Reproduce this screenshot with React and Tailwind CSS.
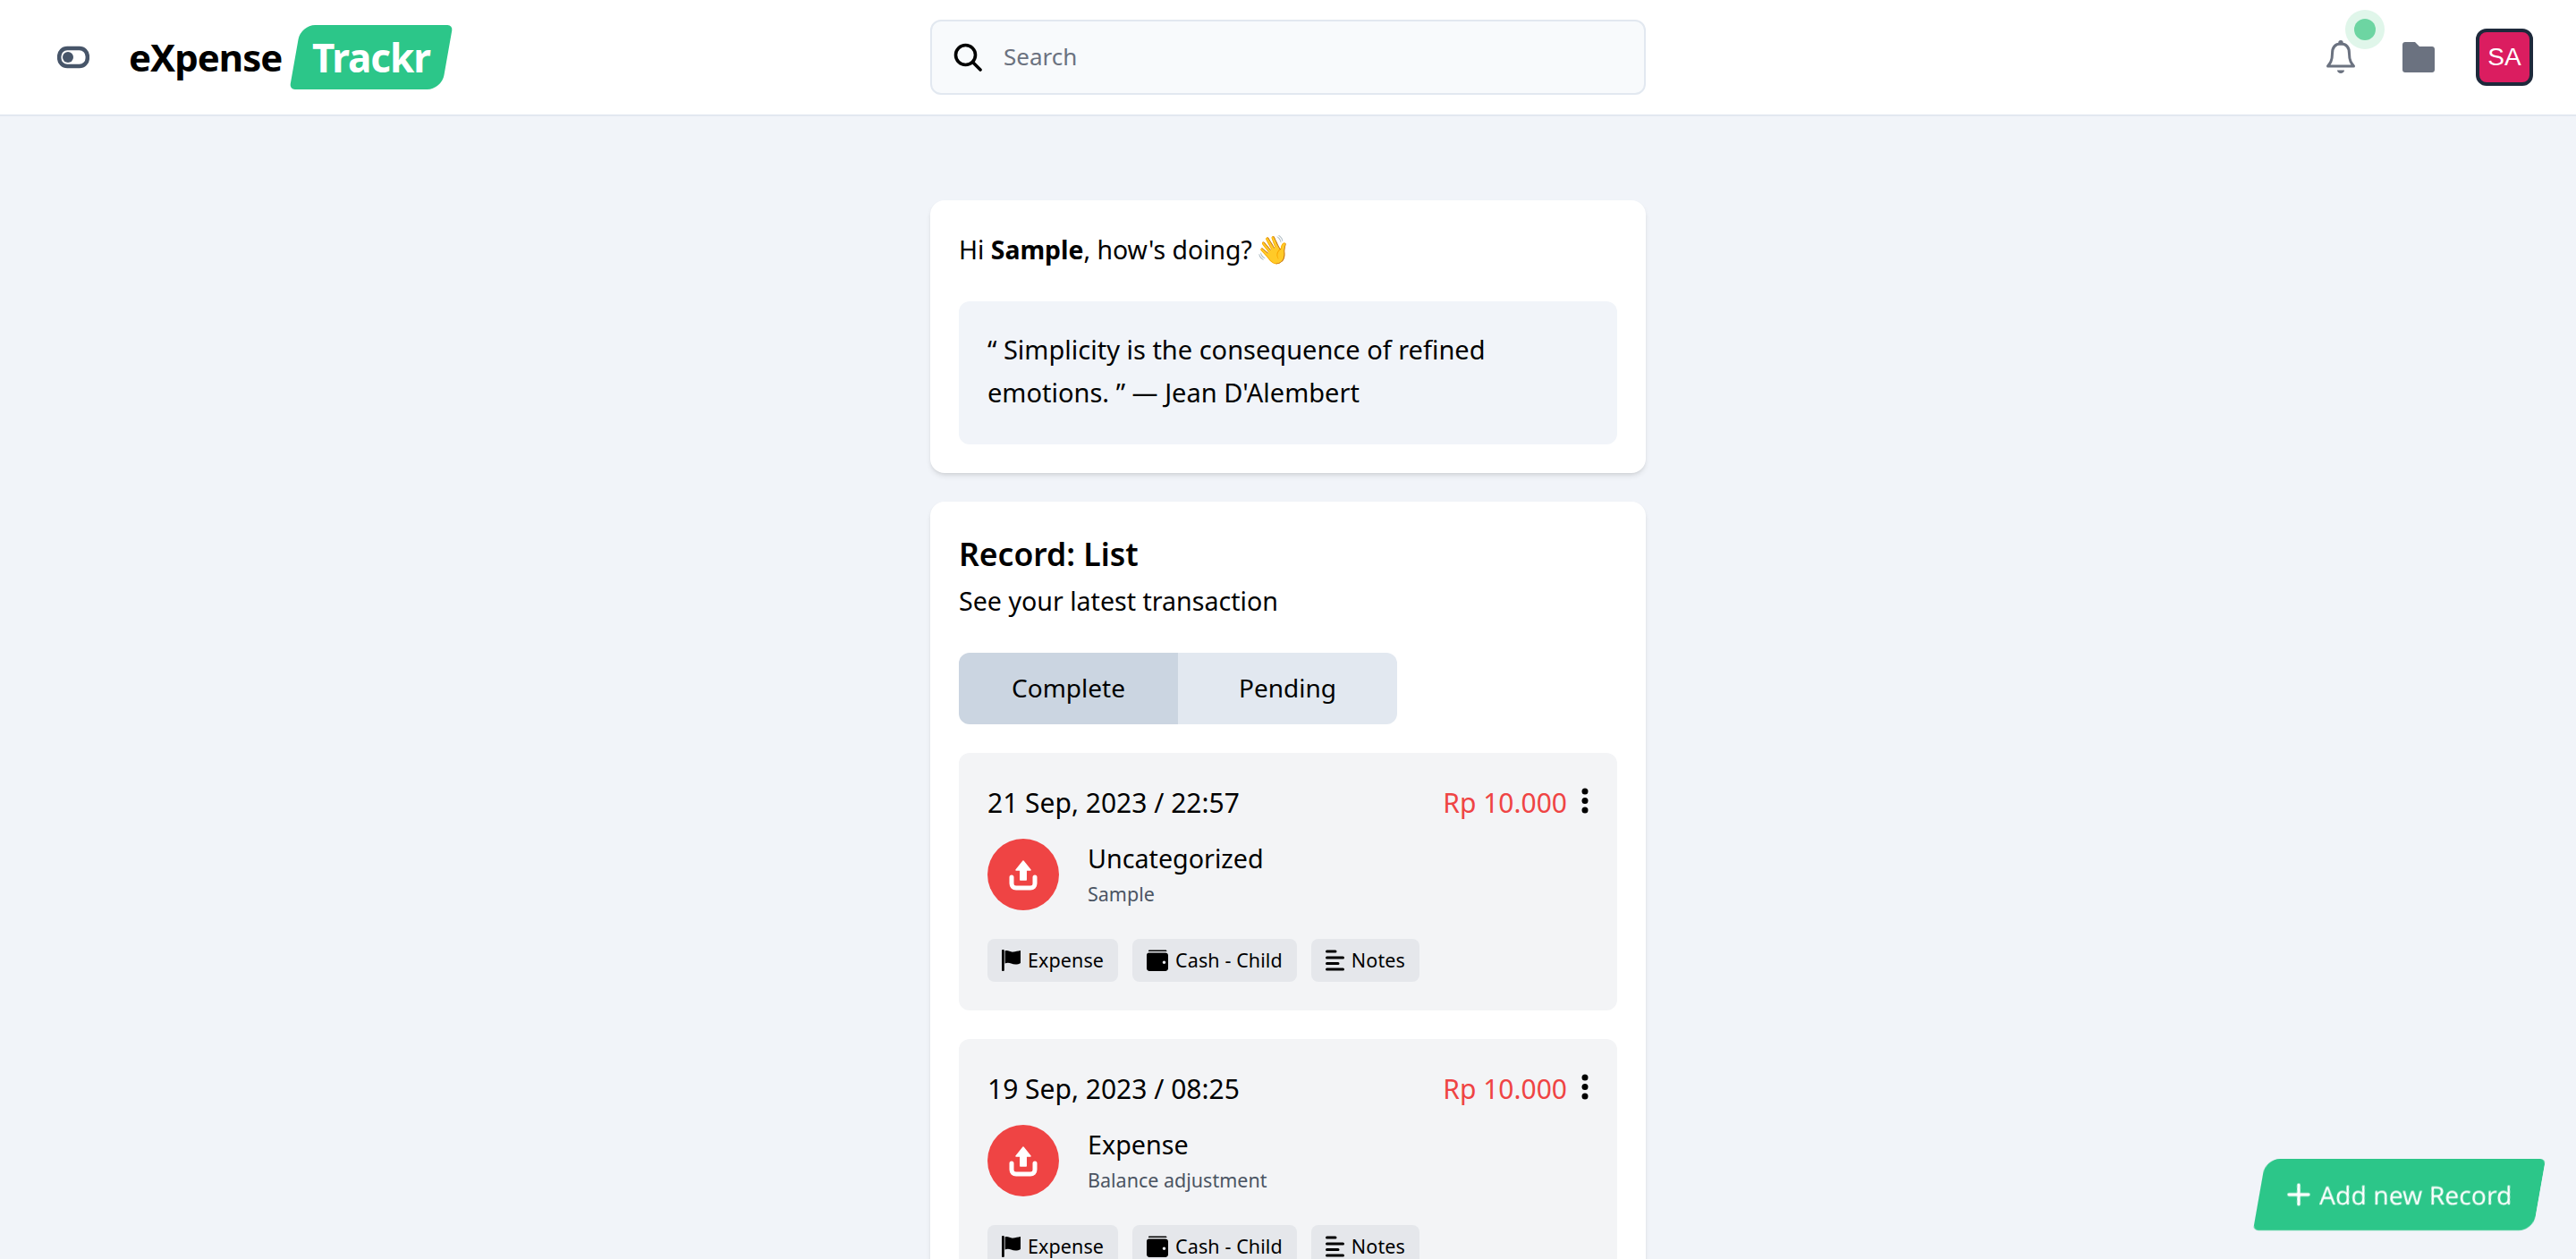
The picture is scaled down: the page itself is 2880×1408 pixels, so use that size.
const font = { fontFamily: '"Noto Sans", sans-serif' };

const UploadIcon = () => (
  <svg className="h-10 w-10" viewBox="0 0 40 40" fill="none" aria-hidden>
    <path d="M20 5 L28 15 H23.2 V26 H16.8 V15 H12 Z" fill="white" stroke="white" strokeWidth="1.5" strokeLinejoin="round" />
    <path d="M7 23 V30 C7 33 9 35 12 35 H28 C31 35 33 33 33 30 V23" stroke="white" strokeWidth="5" strokeLinecap="round" />
  </svg>
);

const FlagIcon = () => (
  <svg className="h-6 w-[21px] shrink-0" viewBox="0 0 21 24" fill="black" aria-hidden>
    <path d="M1.4 0 C2.2 0 2.8 .5 2.8 1 V23 C2.8 23.6 2.2 24 1.4 24 C.6 24 0 23.6 0 23 V1 C0 .5 .6 0 1.4 0 Z" />
    <path d="M3.6 1.4 C7 .2 9.5 3.2 13 2.6 C15.6 2.2 18 1.6 21 1 V15 C18 17 13.5 17 10.5 15.5 C8 14.5 5.6 14.5 3.6 15.5 Z" />
  </svg>
);

const WalletIcon = () => (
  <svg className="h-6 w-6 shrink-0" viewBox="0 0 24 24" fill="black" aria-hidden>
    <path d="M3 0.5 H21 C22 0.5 22.5 1.2 22.5 2 H2 C1.8 1.2 2.2 0.5 3 0.5 Z" />
    <path fillRule="evenodd" d="M2.5 3.5 H21 C22.6 3.5 24 4.8 24 6.4 V21 C24 22.6 22.6 24 21 24 H3 C1.4 24 0 22.6 0 21 V6 C0 4.6 1.1 3.5 2.5 3.5 Z M19.5 12.5 A1.8 1.8 0 1 0 19.5 16.1 A1.8 1.8 0 1 0 19.5 12.5 Z" />
  </svg>
);

const NotesIcon = () => (
  <svg className="h-6 w-[21px] shrink-0" viewBox="0 0 21 24" fill="none" stroke="black" strokeWidth="3" strokeLinecap="round" aria-hidden>
    <path d="M1.5 2 H11 M1.5 9 H19.5 M1.5 15.5 H14 M1.5 22 H19.5" />
  </svg>
);

const Tag = ({ icon, label }) => (
  <span className="flex h-12 items-center gap-2 rounded-lg bg-[#e5e7eb] px-4 text-[21.5px] leading-none tracking-[0.1px] text-black">
    {icon}
    {label}
  </span>
);

const Record = ({ date, title, sub }) => (
  <div className="rounded-xl bg-[#f3f4f6] p-8">
    <div className="flex h-12 items-center justify-between">
      <span className="text-[30px] leading-none text-black">{date}</span>
      <div className="-mr-[6px] flex items-center gap-2.5">
        <span className="text-[30px] leading-none text-[#ef4444]">Rp 10.000</span>
        <svg className="h-12 w-[20px]" viewBox="0 0 20 48" fill="black" aria-hidden>
          <circle cx="10" cy="11" r="3.5" />
          <circle cx="10" cy="21.5" r="3.5" />
          <circle cx="10" cy="32" r="3.5" />
        </svg>
      </div>
    </div>
    <div className="mt-4 flex items-center gap-8">
      <div className="flex h-20 w-20 shrink-0 items-center justify-center rounded-full bg-[#ef4444]">
        <UploadIcon />
      </div>
      <div className="flex flex-col">
        <span className="text-[28.7px] leading-[40px] text-black">{title}</span>
        <span className="mt-1 text-[21.5px] leading-8 text-[#4b5563]">{sub}</span>
      </div>
    </div>
    <div className="mt-8 flex gap-4">
      <Tag icon={<FlagIcon />} label="Expense" />
      <Tag icon={<WalletIcon />} label="Cash - Child" />
      <Tag icon={<NotesIcon />} label="Notes" />
    </div>
  </div>
);

export default function App() {
  return (
    <div className="flex h-[1408px] flex-col overflow-hidden bg-[#f1f4f9]" style={font}>
      <header className="grid h-[130px] shrink-0 grid-cols-[1fr_800px_1fr] items-center border-b-2 border-[#e2e8f0] bg-white">
        <div className="flex items-center pl-[64px]">
          <svg className="h-[26px] w-[36px]" viewBox="0 0 36 26" fill="none" aria-hidden>
            <rect x="2.2" y="3" width="31.6" height="20" rx="9" stroke="#475569" strokeWidth="4.5" />
            <circle cx="12" cy="13" r="6" fill="#475569" />
          </svg>
          <span className="ml-[44px] text-[42px] font-bold leading-none tracking-[-1px] text-black">eXpense</span>
          <div className="ml-[15px] flex h-[72px] w-[170px] -skew-x-[10deg] items-center justify-center rounded-tl-2xl rounded-tr-md rounded-br-2xl rounded-bl-md bg-[#2cc689]">
            <span className="skew-x-[10deg] text-[44px] font-bold leading-none tracking-[-1px] text-white">Trackr</span>
          </div>
        </div>
        <div className="flex h-[84px] items-center rounded-xl border-2 border-[#e2e8f0] bg-[#f8fafc] pl-6">
          <svg className="h-8 w-8" viewBox="0 0 32 32" fill="none" stroke="black" strokeWidth="3.6" strokeLinecap="round" aria-hidden>
            <circle cx="13.5" cy="13.5" r="11" />
            <path d="M21.5 21.5 L30 30" />
          </svg>
          <span className="ml-6 pb-0.5 text-[26px] leading-none text-[#6b7280]">Search</span>
        </div>
        <div className="flex items-center justify-end pr-[48px]">
          <div className="relative">
            <svg className="h-[38px] w-[34px]" viewBox="0 0 34 38" fill="none" stroke="#6b7280" strokeWidth="3" strokeLinejoin="round" aria-hidden>
              <path d="M17 4 C10 4 7.5 9 7.5 15 C7.5 23 5 26 2.5 29 H31.5 C29 26 26.5 23 26.5 15 C26.5 9 24 4 17 4 Z" />
              <circle cx="17" cy="2.8" r="1.2" fill="#6b7280" />
              <path d="M13 33.5 H21 C21 35.5 19 37 17 37 C15 37 13 35.5 13 33.5 Z" fill="#6b7280" stroke="none" />
            </svg>
            <span className="absolute -top-[34px] left-[22px] flex h-11 w-11 items-center justify-center rounded-full bg-[#e0f6ea]">
              <span className="h-6 w-6 rounded-full bg-[#6dd5a2]" />
            </span>
          </div>
          <svg className="ml-[52px] h-[34px] w-[36px]" viewBox="0 0 36 34" fill="#6b7280" aria-hidden>
            <path d="M3 0 H14 L19 5 H33 C34.7 5 36 6.3 36 8 V31 C36 32.7 34.7 34 33 34 H3 C1.3 34 0 32.7 0 31 V3 C0 1.3 1.3 0 3 0 Z" />
          </svg>
          <div className="ml-[46px] flex h-16 w-16 items-center justify-center rounded-xl border-4 border-[#1e293b] bg-[#db1d60] text-[28px] leading-none text-white" style={{ fontFamily: '"Liberation Sans", sans-serif' }}>
            SA
          </div>
        </div>
      </header>

      <main className="mx-auto mt-[94px] flex w-[800px] flex-col gap-8">
        <section className="rounded-2xl bg-white p-8 shadow-md">
          <p className="-mt-0.5 text-[28.4px] leading-12 text-black">
            Hi <b className="font-bold">Sample</b>, how's doing?<span className="ml-1 text-[31px]">👋</span>
          </p>
          <div className="mt-[34px] rounded-xl bg-[#f1f4f9] px-8 pt-[30px] pb-[34px] text-[29px] leading-12 text-black">
            “ Simplicity is the consequence of refined emotions. ” — Jean D'Alembert
          </div>
        </section>

        <section className="rounded-2xl bg-white p-8 shadow-md">
          <h2 className="mt-0.5 text-[35.5px] font-semibold leading-[48px] text-black">Record: List</h2>
          <p className="mt-[5px] text-[28.6px] leading-[48px] text-black">See your latest transaction</p>
          <div className="mt-[34px] flex h-20 w-[490px] overflow-hidden rounded-xl pb-0 text-[28px] text-black">
            <span className="flex flex-1 items-center justify-center bg-[#cbd5e1] pb-0.5">Complete</span>
            <span className="flex flex-1 items-center justify-center bg-[#e2e8f0] pb-0.5">Pending</span>
          </div>
          <div className="mt-8 flex flex-col gap-8">
            <Record date="21 Sep, 2023 / 22:57" title="Uncategorized" sub="Sample" />
            <Record date="19 Sep, 2023 / 08:25" title="Expense" sub="Balance adjustment" />
          </div>
        </section>
      </main>

      <button className="fixed bottom-8 right-[41px] flex h-20 w-[313px] -skew-x-[10deg] items-center justify-center rounded-tl-2xl rounded-tr-md rounded-br-2xl rounded-bl-md bg-[#2cc689] text-[28.3px] leading-none text-white">
        <span className="flex skew-x-[10deg] items-center gap-2.5">
          <svg className="h-[26px] w-[26px]" viewBox="0 0 26 26" fill="none" stroke="white" strokeWidth="3.5" strokeLinecap="round" aria-hidden>
            <path d="M13 2 V24 M2 13 H24" />
          </svg>
          Add new Record
        </span>
      </button>
    </div>
  );
}
